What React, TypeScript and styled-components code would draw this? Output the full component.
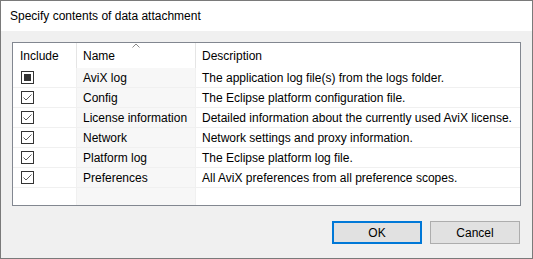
import styled, { createGlobalStyle } from 'styled-components'

const GlobalStyle = createGlobalStyle`
    html, body {
        margin: 0;
        padding: 0;
        background: #f0f0f0;
    }
    body {
        font-family: "Segoe UI", "Liberation Sans", Arial, sans-serif;
        font-size: 12px;
        color: #000;
    }
`

const Window = styled.div`
    width: 533px;
    height: 259px;
    box-sizing: border-box;
    border: 1px solid #7a7a7a;
    background: #f0f0f0;
    display: flex;
    flex-direction: column;
`
const TitleBar = styled.div`
    height: 30px;
    background: #fff;
    display: flex;
    align-items: center;
    padding-left: 9px;
    font-size: 12px;
`
const Body = styled.div`
    flex: 1;
    display: flex;
    flex-direction: column;
    padding: 11px 11px 14px 11px;
`
const Table = styled.div`
    height: 164px;
    box-sizing: border-box;
    border: 1px solid #828790;
    background: #fff;
    display: flex;
    flex-direction: column;
`
const Row = styled.div<{ $header?: boolean; $last?: boolean }>`
    display: grid;
    grid-template-columns: 64px 119px 1fr;
    height: ${(p) => (p.$header ? '25px' : p.$last ? 'auto' : '20px')};
    flex: ${(p) => (p.$last ? '1' : 'none')};
    box-sizing: border-box;
    border-bottom: ${(p) => (p.$header || p.$last ? 'none' : '1px solid #f0f0f0')};
`
const Cell = styled.div<{ $col: 'include' | 'name' | 'desc'; $header?: boolean }>`
    position: relative;
    display: flex;
    align-items: center;
    white-space: nowrap;
    overflow: hidden;
    padding-left: ${(p) => (p.$col === 'include' ? (p.$header ? '7px' : '8px') : '6px')};
    background: ${(p) => (p.$col === 'name' && !p.$header ? '#f7f7f7' : 'transparent')};
    border-right: ${(p) =>
        p.$col === 'desc' ? 'none' : p.$header ? '1px solid #e5e5e5' : '1px solid #f0f0f0'};
`
const SortArrow = styled.svg`
    position: absolute;
    top: 0px;
    left: 55px;
`
const Buttons = styled.div`
    display: flex;
    justify-content: flex-end;
    gap: 8px;
    margin-top: 15px;
    padding-right: 1px;
`
const Button = styled.button<{ $default?: boolean }>`
    width: 90px;
    height: 23px;
    box-sizing: border-box;
    background: #e1e1e1;
    border: ${(p) => (p.$default ? '2px solid #0078d7' : '1px solid #adadad')};
    font-family: inherit;
    font-size: 12px;
    color: #000;
    padding: 0;
    display: flex;
    align-items: center;
    justify-content: center;
`

const CheckBox = ({ state }: { state: 'checked' | 'mixed' }) => (
    <svg width="13" height="13" viewBox="0 0 13 13">
        <rect x="0.5" y="0.5" width="12" height="12" fill="#fff" stroke="#333" />
        {state === 'mixed' ? (
            <rect x="3" y="3" width="7" height="7" fill="#333" />
        ) : (
            <path d="M2.5 6.5 L5 9 L10.5 3.5" fill="none" stroke="#5a5a5a" strokeWidth="1" />
        )}
    </svg>
)

const rows = [
    { name: 'AviX log', desc: 'The application log file(s) from the logs folder.', state: 'mixed' as const },
    { name: 'Config', desc: 'The Eclipse platform configuration file.', state: 'checked' as const },
    { name: 'License information', desc: 'Detailed information about the currently used AviX license.', state: 'checked' as const },
    { name: 'Network', desc: 'Network settings and proxy information.', state: 'checked' as const },
    { name: 'Platform log', desc: 'The Eclipse platform log file.', state: 'checked' as const },
    { name: 'Preferences', desc: 'All AviX preferences from all preference scopes.', state: 'checked' as const },
]

const App = () => {
    return (
        <>
            <GlobalStyle />
            <Window>
                <TitleBar>Specify contents of data attachment</TitleBar>
                <Body>
                    <Table>
                        <Row $header>
                            <Cell $col='include' $header>Include</Cell>
                            <Cell $col='name' $header>
                                <SortArrow width="8" height="6" viewBox="0 0 8 6">
                                    <path d="M0.5 4.5 L4 1 L7.5 4.5" fill="none" stroke="#8a8a8a" strokeWidth="1" />
                                </SortArrow>
                                Name
                            </Cell>
                            <Cell $col='desc' $header>Description</Cell>
                        </Row>
                        {rows.map((r) => (
                            <Row key={r.name}>
                                <Cell $col='include'><CheckBox state={r.state} /></Cell>
                                <Cell $col='name'>{r.name}</Cell>
                                <Cell $col='desc'>{r.desc}</Cell>
                            </Row>
                        ))}
                        <Row $last>
                            <Cell $col='include' />
                            <Cell $col='name' />
                            <Cell $col='desc' />
                        </Row>
                    </Table>
                    <Buttons>
                        <Button $default>OK</Button>
                        <Button>Cancel</Button>
                    </Buttons>
                </Body>
            </Window>
        </>
    )
}

export default App
